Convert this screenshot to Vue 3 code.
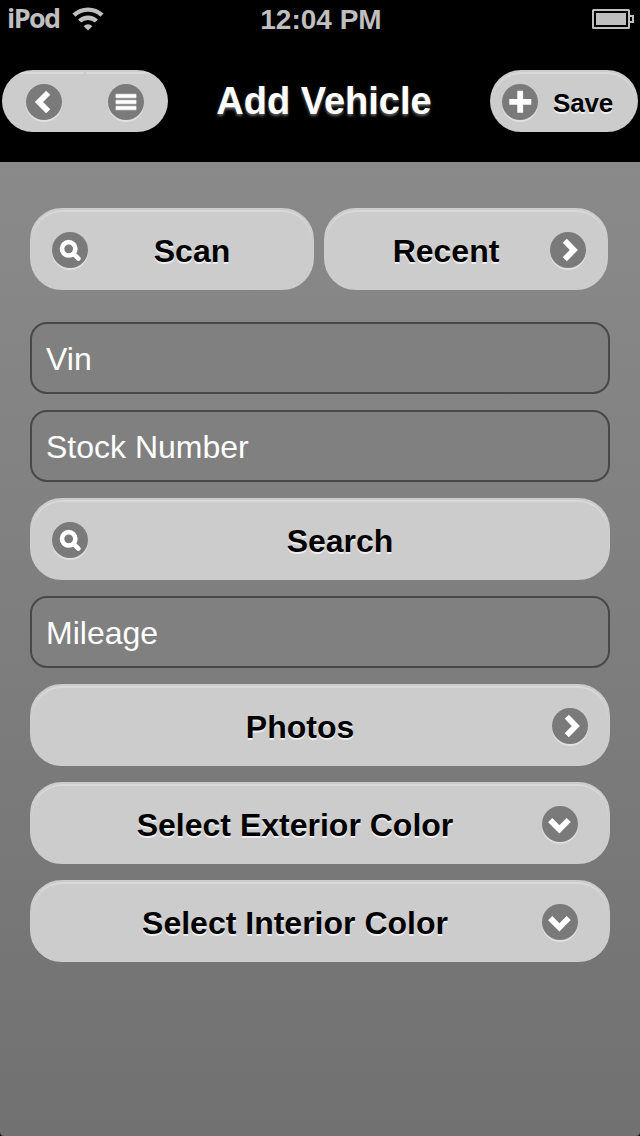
<script setup>
    import { ref } from 'vue';
    var vin = ref('');
    var stock_number = ref('');
    var mileage = ref('');

    /* Icon shapes, drawn on a 36x36 disc */
    const icons = {
        left: 'M22.2 8.8L13 18L22.2 27.2',
        right: 'M14.8 8.8L23.8 18L14.8 27.2',
        down: 'M8.2 14.1L17.4 23.3L26.7 14',
        plus: 'M7.3 17.9H29.3M18.2 6.8V28.8',
        search: 'M10 16.8a6.7 6.7 0 1 0 13.4 0a6.7 6.7 0 1 0 -13.4 0M21.6 21.8L26.4 26.6',
    };
</script>

<template>
    <div class="page">
        <div class="status_bar">
            <div class="carrier">
                <span class="carrier_name">iPod</span>
                <svg class="wifi" width="32" height="24" viewBox="0 0 32 24">
                    <path d="M2 8.2A20.5 20.5 0 0 1 30 8.2" />
                    <path d="M7.6 14A12.4 12.4 0 0 1 24.4 14" />
                    <path class="wifi_dot" d="M16 23.5L11.6 19.2A6.2 6.2 0 0 1 20.4 19.2Z" />
                </svg>
            </div>
            <div class="clock">12:04 PM</div>
            <svg class="battery" width="42" height="20" viewBox="0 0 42 20">
                <rect class="battery_line" x="1" y="1" width="36" height="18" rx="0.5" />
                <rect class="battery_fill" x="4" y="4" width="30" height="12" />
                <path class="battery_line" d="M38 7H41V13H38" />
            </svg>
        </div>

        <div class="header">
            <div class="nav_group">
                <button class="nav_btn nav_back">
                    <svg class="icon" viewBox="0 0 36 36"><path :d="icons.left" /></svg>
                </button>
                <button class="nav_btn nav_menu">
                    <svg class="icon" viewBox="0 0 36 36">
                        <path class="bar_glow" d="M7.7 12H28.3M7.7 18H28.3M7.7 24H28.3" />
                        <path class="bars" d="M7.7 12H28.3M7.7 18H28.3M7.7 24H28.3" />
                    </svg>
                </button>
            </div>
            <h1 class="title">Add Vehicle</h1>
            <button class="save">
                <svg class="icon" viewBox="0 0 36 36"><path :d="icons.plus" /></svg>
                <span class="save_text">Save</span>
            </button>
        </div>

        <div class="content">
            <div class="button_row">
                <button class="btn">
                    <svg class="icon" viewBox="0 0 36 36"><path class="lens" :d="icons.search" /></svg>
                    <span class="btn_text btn_text_left">Scan</span>
                </button>
                <button class="btn">
                    <span class="btn_text btn_text_right">Recent</span>
                    <svg class="icon" viewBox="0 0 36 36"><path :d="icons.right" /></svg>
                </button>
            </div>
            <input v-model="vin" class="field" type="text" placeholder="Vin">
            <input v-model="stock_number" class="field" type="text" placeholder="Stock Number">
            <button class="btn">
                <svg class="icon" viewBox="0 0 36 36"><path class="lens" :d="icons.search" /></svg>
                <span class="btn_text btn_text_left">Search</span>
            </button>
            <input v-model="mileage" class="field" type="text" placeholder="Mileage">
            <button class="btn">
                <span class="btn_text btn_text_right">Photos</span>
                <svg class="icon" viewBox="0 0 36 36"><path :d="icons.right" /></svg>
            </button>
            <button class="btn btn_select">
                <span class="btn_text">Select Exterior Color</span>
                <svg class="icon" viewBox="0 0 36 36"><path :d="icons.down" /></svg>
            </button>
            <button class="btn btn_select">
                <span class="btn_text">Select Interior Color</span>
                <svg class="icon" viewBox="0 0 36 36"><path :d="icons.down" /></svg>
            </button>
        </div>
    </div>
</template>

<style>
body {
    background-color: #000;
}
</style>

<style scoped>
.page {
    width: 640px;
    height: 1136px;
    display: flex;
    flex-direction: column;
    overflow: hidden;
    background-color: #000;
    font-family: "Liberation Sans", Arial, sans-serif;
}

button, input {
    box-sizing: border-box;
    margin: 0;
    padding: 0;
    border: 0;
    font-family: inherit;
}

/* Status bar CSS */
.status_bar {
    height: 40px;
    display: grid;
    grid-template-columns: 1fr auto 1fr;
    align-items: center;
    padding: 0 6px 2px 7px;
    box-sizing: border-box;
    color: #bfbfbf;
}

.carrier {
    display: flex;
    align-items: center;
    gap: 12px;
}

.carrier_name {
    width: 53px;
    font-family: "Open Sans", sans-serif;
    font-size: 27px;
    font-weight: bold;
    line-height: 34px;
    padding-bottom: 2px;
    letter-spacing: -1.6px;
    white-space: nowrap;
}

.wifi path {
    fill: none;
    stroke: #bfbfbf;
    stroke-width: 4.4;
}

.wifi .wifi_dot {
    fill: #bfbfbf;
    stroke: none;
}

.clock {
    padding-top: 2px;
    padding-left: 1px;
    font-size: 28px;
    font-weight: bold;
    line-height: 36px;
}

.battery {
    justify-self: end;
}

.battery_line {
    fill: none;
    stroke: #bfbfbf;
    stroke-width: 2;
}

.battery_fill {
    fill: #bfbfbf;
}

/* Header CSS */
.header {
    height: 122px;
    display: flex;
    align-items: flex-start;
    padding: 30px 2px 0;
    box-sizing: border-box;
}

.nav_group {
    display: flex;
    width: 166px;
    height: 62px;
    overflow: hidden;
    border-radius: 31px;
}

.nav_btn {
    width: 83px;
    display: flex;
    align-items: center;
    padding-top: 2px;
    background: linear-gradient(#ccc 2px, #d9d9d9 2px, #d9d9d9 4px, #ccc 4px);
}

.nav_back {
    padding-left: 24px;
    border-right: 1px solid #ccc;
}

.nav_menu {
    padding-left: 22px;
    border-left: 1px solid #ccc;
}

.title {
    flex: 1;
    margin: 0;
    padding-right: 10px;
    text-align: center;
    color: #fff;
    font-size: 38px;
    line-height: 62px;
    white-space: nowrap;
    text-shadow: 0 2px 3px #666;
}

.save {
    display: flex;
    align-items: center;
    width: 148px;
    height: 62px;
    padding: 0 12px 0 10px;
    border: 2px solid #ccc;
    border-bottom: 0;
    border-radius: 31px;
    background-color: #ccc;
    box-shadow: inset 0 2px 0 #d9d9d9;
}

.save_text {
    margin-left: 15px;
    padding-top: 2px;
    color: #000;
    font-size: 26px;
    font-weight: bold;
    letter-spacing: -0.2px;
    text-shadow: 0 2px 0 #eee;
}

/* Round icon CSS */
.icon {
    flex: none;
    width: 36px;
    height: 36px;
    border-radius: 50%;
    background-color: #7a7a7a;
    box-shadow: 0 2px 0 rgba(255, 255, 255, 0.4);
}

.icon path {
    fill: none;
    stroke: #fff;
    stroke-width: 5.8;
}

.icon .lens {
    stroke-width: 4.6;
    stroke-linecap: round;
}

.icon .bars {
    stroke-width: 3.4;
}

.icon .bar_glow {
    stroke: #aaa;
    stroke-width: 5;
}

/* Form CSS */
.content {
    flex: 1;
    display: flex;
    flex-direction: column;
    gap: 16px;
    padding: 46px 30px 0;
    border-radius: 0 0 4px 4px;
    background: linear-gradient(#8a8a8a, #717171);
}

.button_row {
    display: flex;
    gap: 10px;
    margin-bottom: 16px;
    padding-right: 2px;
}

.button_row .btn {
    flex: 1;
}

.btn {
    display: flex;
    align-items: center;
    flex: none;
    height: 82px;
    padding: 2px 20px 0;
    border: 2px solid #ccc;
    border-radius: 32px;
    background-color: #ccc;
    box-shadow: inset 0 2px 0 #d9d9d9;
}

.btn_text {
    flex: 1;
    padding-top: 2px;
    text-align: center;
    color: #000;
    font-size: 32px;
    font-weight: bold;
    text-shadow: 0 2px 0 #eee;
}

.btn_text_left {
    padding-left: 22px;
    padding-right: 18px;
}

.btn_text_right {
    padding-left: 18px;
    padding-right: 22px;
}

.btn_select {
    padding-left: 36px;
    padding-right: 30px;
}

.btn_select .btn_text {
    padding-right: 20px;
}

.field {
    flex: none;
    width: 100%;
    height: 72px;
    padding: 2px 14px 0;
    border: 2px solid #484848;
    border-radius: 17px;
    outline: none;
    background-color: #808080;
    color: #fff;
    font-size: 32px;
}

.field::placeholder {
    color: #fff;
    opacity: 1;
}
</style>
